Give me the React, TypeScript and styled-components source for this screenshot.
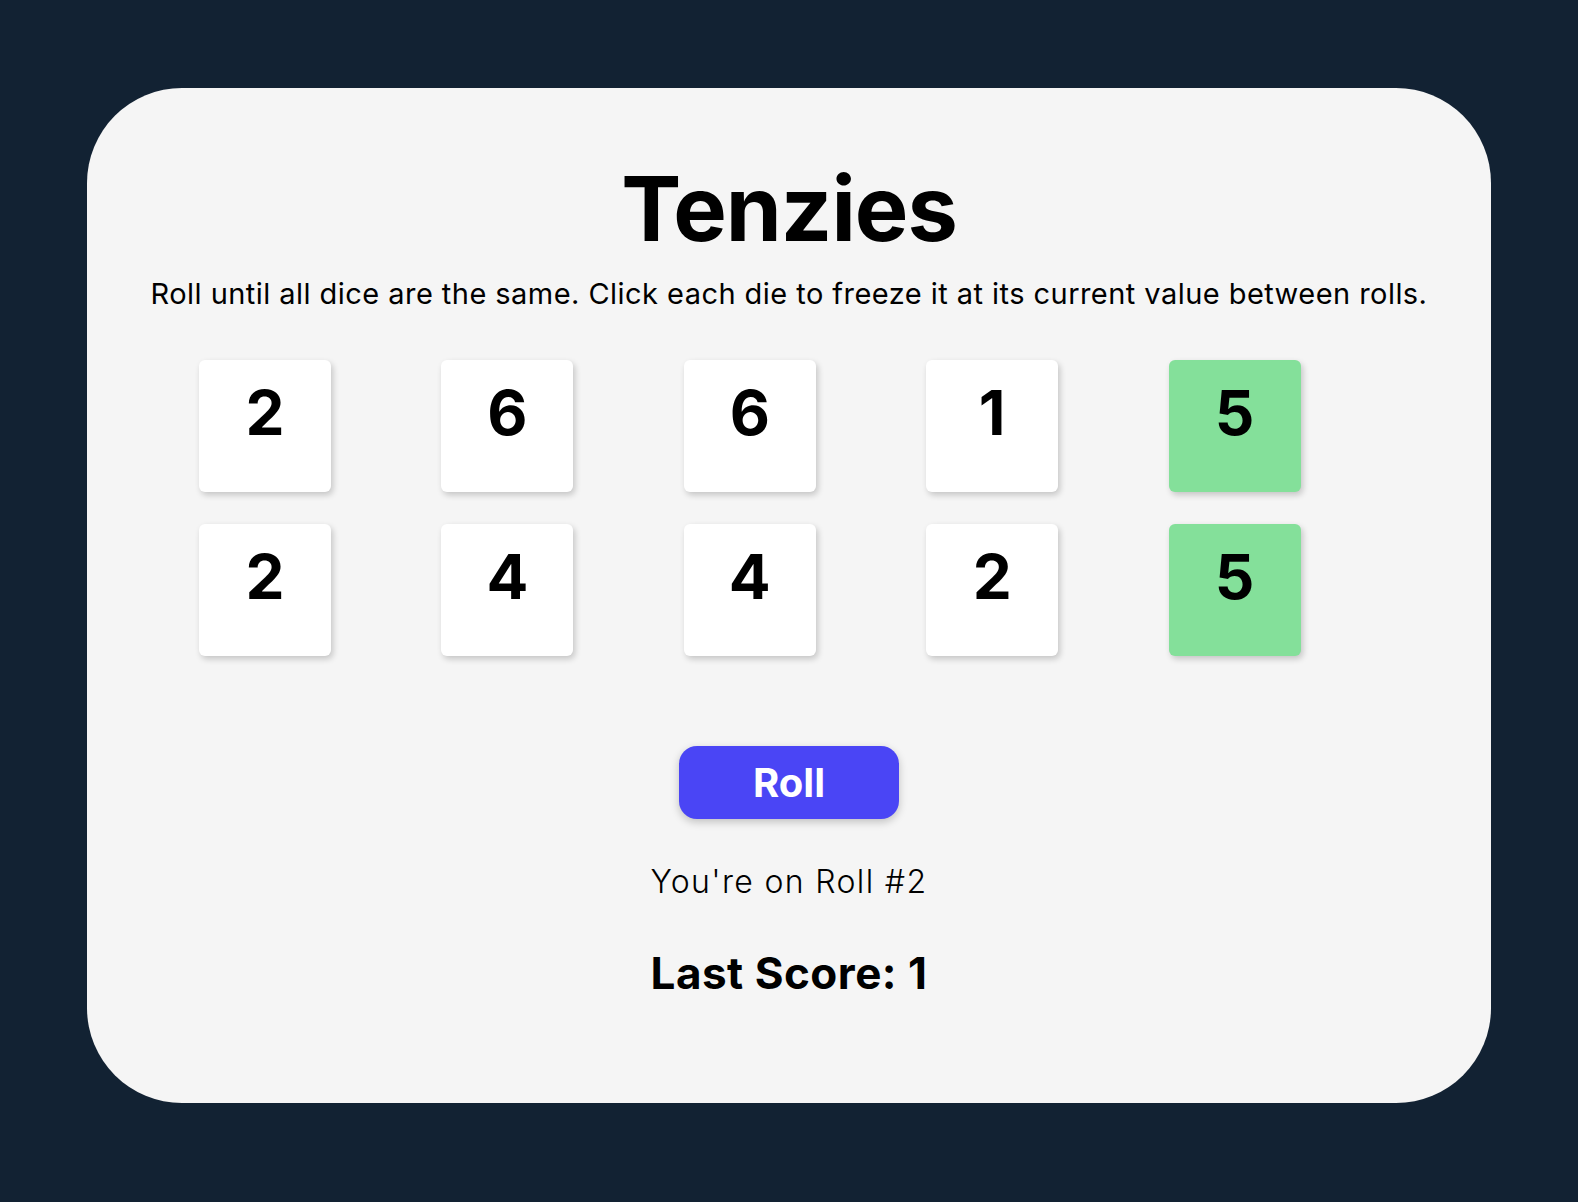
import React from "react";
import styled, { createGlobalStyle } from "styled-components";

const GlobalStyle = createGlobalStyle`
  html, body {
    margin: 0;
    padding: 0;
    background: #122233;
  }
  body {
    font-family: Inter, "Noto Sans", "Liberation Sans", sans-serif;
  }
`;

const Page = styled.div`
  min-height: 1202px;
  padding-top: 88px;
  box-sizing: border-box;
`;

const Card = styled.main`
  width: 1404px;
  margin: 0 auto;
  box-sizing: border-box;
  background: #f5f5f5;
  border-radius: 95px;
  padding: 76px 0 108px;
  display: flex;
  flex-direction: column;
  align-items: center;
  color: #000;
`;

const Title = styled.h1`
  margin: 0;
  font-size: 90px;
  line-height: 1;
  font-weight: 700;
  letter-spacing: -1px;
`;

const Instructions = styled.p`
  margin: 25px 0 0;
  font-size: 29px;
  line-height: 1;
  font-weight: 400;
  letter-spacing: 0.45px;
`;

const DiceGrid = styled.div`
  align-self: stretch;
  margin: 52px 80px 0 112px;
  display: grid;
  grid-template-columns: repeat(5, 1fr);
  row-gap: 32px;
`;

const Die = styled.button<{ $held: boolean }>`
  width: 132px;
  height: 132px;
  box-sizing: border-box;
  border: none;
  border-radius: 6px;
  background: ${(p) => (p.$held ? "#84e09a" : "#ffffff")};
  box-shadow: 2px 3px 6px rgba(0, 0, 0, 0.2);
  display: flex;
  justify-content: center;
  align-items: flex-start;
  padding: 22px 0 0;
  font-family: Inter, "Noto Sans", sans-serif;
  font-size: 62px;
  line-height: 1;
  font-weight: 700;
  color: #000;
  cursor: pointer;
`;

const RollButton = styled.button`
  margin-top: 90px;
  width: 220px;
  height: 73px;
  border: none;
  border-radius: 18px;
  background: #4a45f5;
  color: #fff;
  font-family: Inter, "Noto Sans", sans-serif;
  font-size: 40px;
  font-weight: 700;
  line-height: 1;
  box-shadow: 0 3px 8px rgba(0, 0, 0, 0.22);
  cursor: pointer;
`;

const RollCount = styled.p`
  margin: 47px 0 0;
  font-size: 32px;
  line-height: 1;
  font-weight: 300;
  letter-spacing: 1.35px;
`;

const LastScore = styled.p`
  margin: 53px 0 0;
  font-size: 44px;
  line-height: 1;
  font-weight: 700;
  letter-spacing: 0.5px;
`;

const dice = [
  { value: 2, held: false },
  { value: 6, held: false },
  { value: 6, held: false },
  { value: 1, held: false },
  { value: 5, held: true },
  { value: 2, held: false },
  { value: 4, held: false },
  { value: 4, held: false },
  { value: 2, held: false },
  { value: 5, held: true },
];

export default function App() {
  return (
    <>
      <GlobalStyle />
      <Page>
        <Card>
          <Title>Tenzies</Title>
          <Instructions>
            Roll until all dice are the same. Click each die to freeze it at its current value between rolls.
          </Instructions>
          <DiceGrid>
            {dice.map((d, i) => (
              <Die key={i} $held={d.held}>
                {d.value}
              </Die>
            ))}
          </DiceGrid>
          <RollButton>Roll</RollButton>
          <RollCount>You're on Roll #2</RollCount>
          <LastScore>Last Score: 1</LastScore>
        </Card>
      </Page>
    </>
  );
}
